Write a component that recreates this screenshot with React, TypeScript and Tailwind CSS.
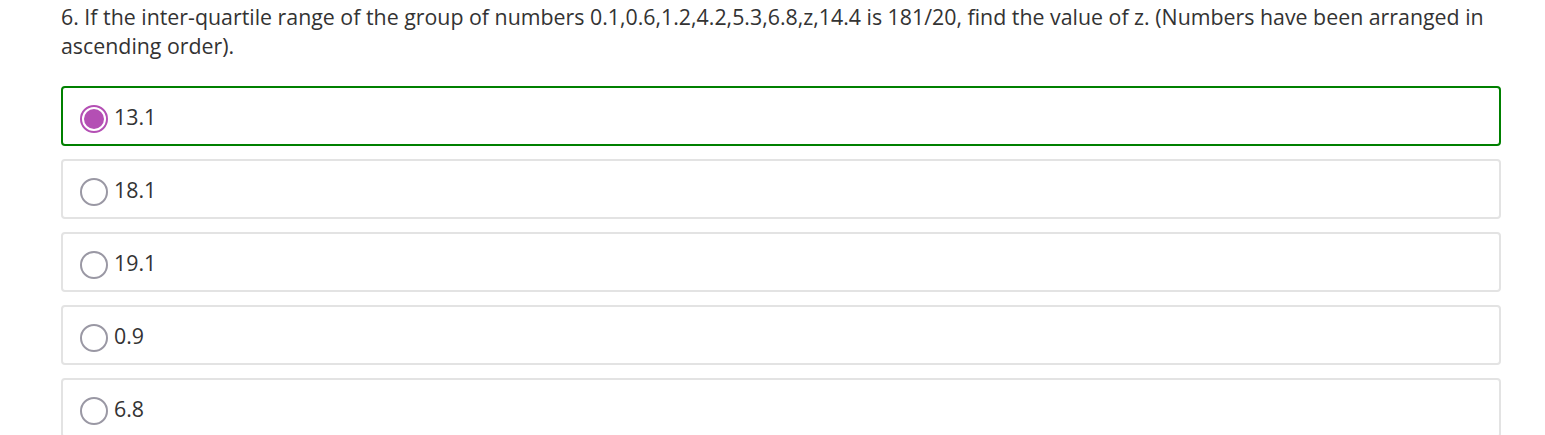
const options = [
  { label: "13.1", selected: true },
  { label: "18.1", selected: false },
  { label: "19.1", selected: false },
  { label: "0.9", selected: false },
  { label: "6.8", selected: false },
];

function Radio({ checked }: { checked: boolean }) {
  if (checked) {
    return (
      <span className="mt-[6px] flex h-[28px] w-[28px] shrink-0 items-center justify-center rounded-full border-2 border-[#b44fb4] bg-white">
        <span className="h-[20px] w-[20px] rounded-full bg-[#b44fb4]" />
      </span>
    );
  }
  return (
    <span className="mt-[6px] h-[28px] w-[28px] shrink-0 rounded-full border-2 border-[#9a98a4] bg-white" />
  );
}

export default function App() {
  return (
    <div
      className="min-h-[435px] bg-white text-[#333333]"
      style={{ fontFamily: '"Open Sans", "Noto Sans", sans-serif' }}
    >
      <div className="ml-[61px] w-[1440px] pt-[2px]">
        <p className="text-[21.35px] leading-[29px]">
          6. If the inter-quartile range of the group of numbers
          0.1,0.6,1.2,4.2,5.3,6.8,z,14.4 is 181/20, find the value of z.
          (Numbers have been arranged in ascending order).
        </p>

        <div className="mt-[26px] flex flex-col gap-[13px]">
          {options.map((opt) => (
            <div
              key={opt.label}
              className={
                opt.selected
                  ? "flex h-[60px] items-center gap-[6px] rounded-[4px] border-2 border-[#008000] px-[17px]"
                  : "flex h-[60px] items-center gap-[6px] rounded-[4px] border-2 border-[#e3e3e3] px-[17px]"
              }
            >
              <Radio checked={opt.selected} />
              <span className="text-[21.35px] leading-[29px]">{opt.label}</span>
            </div>
          ))}
        </div>
      </div>
    </div>
  );
}
